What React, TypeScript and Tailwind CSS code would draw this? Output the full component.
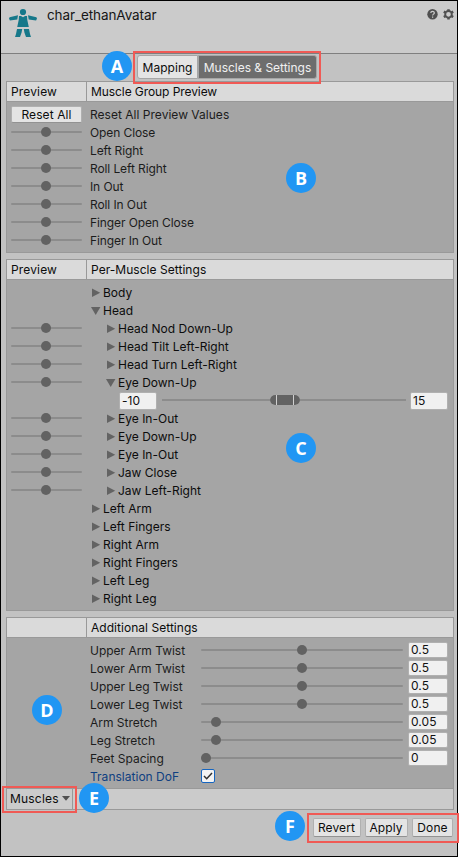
import React from "react";

const Track = ({ pos, className = "" }: { pos: number; className?: string }) => (
  <div className={`relative flex h-[10px] items-center ${className}`}>
    <div className="h-[2px] w-full rounded-full bg-[#8c8c8c]" />
    <div
      className="absolute top-0 size-[10px] rounded-full bg-[#626262]"
      style={{ left: pos }}
    />
  </div>
);

const Preview = ({ show = true }: { show?: boolean }) => (
  <div className="w-[83px] shrink-0 pt-[3px] pl-[4px]">
    {show && <Track pos={30} className="w-[71px]" />}
  </div>
);

const Header = ({ left, right, tight }: { left: string; right: string; tight?: boolean }) => (
  <div className="flex h-[20px] border-b border-[#999999] bg-[#dadada] leading-[19px] text-[#0c0c0c]">
    <div className="w-[80px] shrink-0 border-r border-[#999999] pl-[4px] tracking-[0.15px]">{left}</div>
    <div className={`pl-[4px] ${tight ? "tracking-[-0.08px]" : "tracking-[0.04px]"}`}>{right}</div>
  </div>
);

const Arrow = ({ open }: { open?: boolean }) => (
  <svg width="10" height="10" viewBox="0 0 10 10" className="mt-[4px] shrink-0" fill="#636363">
    {open ? <path d="M0 1H9.4L4.7 9Z" /> : <path d="M1 .5L9.2 4.7L1 9Z" />}
  </svg>
);

const Field = ({ value, className }: { value: string; className: string }) => (
  <div className={`shrink-0 rounded-[2px] border border-[#b0b0b0] bg-[#f0f0f0] pl-[2px] text-[#111] ${className}`}>
    {value}
  </div>
);

const Badge = ({ letter, className }: { letter: string; className: string }) => (
  <div
    className={`absolute flex size-[30px] items-center justify-center rounded-full bg-[#2196f3] font-['Open_Sans',sans-serif] text-[18px] font-bold tracking-normal text-white ${className}`}
  >
    {letter}
  </div>
);

const groups = ["Open Close", "Left Right", "Roll Left Right", "In Out", "Roll In Out", "Finger Open Close", "Finger In Out"];

type Muscle = { name: string; child?: boolean; open?: boolean };
const muscles: Muscle[] = [
  { name: "Body" },
  { name: "Head", open: true },
  { name: "Head Nod Down-Up", child: true },
  { name: "Head Tilt Left-Right", child: true },
  { name: "Head Turn Left-Right", child: true },
  { name: "Eye Down-Up", child: true, open: true },
  { name: "Eye In-Out", child: true },
  { name: "Eye Down-Up", child: true },
  { name: "Eye In-Out", child: true },
  { name: "Jaw Close", child: true },
  { name: "Jaw Left-Right", child: true },
  { name: "Left Arm" },
  { name: "Left Fingers" },
  { name: "Right Arm" },
  { name: "Right Fingers" },
  { name: "Left Leg" },
  { name: "Right Leg" },
];

const additional = [
  { name: "Upper Arm Twist", value: "0.5", pos: 96 },
  { name: "Lower Arm Twist", value: "0.5", pos: 96 },
  { name: "Upper Leg Twist", value: "0.5", pos: 96 },
  { name: "Lower Leg Twist", value: "0.5", pos: 96 },
  { name: "Arm Stretch", value: "0.05", pos: 10 },
  { name: "Leg Stretch", value: "0.05", pos: 10 },
  { name: "Feet Spacing", value: "0", pos: 0 },
];

const button =
  "rounded-[2px] border border-[#b0b0b0] border-b-[#929292] bg-[#e4e4e4] text-center text-[#0c0c0c]";

export default function App() {
  return (
    <div className="h-[857px] w-[472px] overflow-hidden bg-white font-['Inter',sans-serif] text-[12px] tracking-[0.1px] whitespace-nowrap">
      <div className="relative flex h-[857px] w-[458px] flex-col border border-black bg-[#c2c2c2]">
        <header className="flex h-[53px] shrink-0 border-b border-[#7f7f7f] bg-[#cbcbcb]">
          <svg width="28" height="29" viewBox="0 0 28 29" className="mt-[7px] ml-[8px]" fill="#16788a">
            <circle cx="14" cy="4" r="3.1" />
            <path d="M.6 9.2L9 7.3L8.3 11.6L.9 12.6L0 10.6Z M27.4 9.2L19 7.3L19.7 11.6L27.1 12.6L28 10.6Z" />
            <path d="M10 8H12L14 9.3L16 8H18L18.3 12L19.8 19H8.2L9.7 12Z" />
            <path d="M8 21H13.2L12.6 24.5L11 29H6L7 26Z M14.8 21H20L21 26L22 29H17L15.4 24.5Z" />
          </svg>
          <div className="mt-[5px] ml-[10px] text-[13.5px] leading-[18px] tracking-[-0.1px] text-[#161616]">char_ethanAvatar</div>
          <div className="mt-[8px] mr-[3px] ml-auto flex gap-[5px]">
            <svg width="11" height="11" viewBox="0 0 11 11">
              <circle cx="5.5" cy="5.3" r="5.2" fill="#505050" />
              <path d="M3.8 4.1C3.8 1.7 7.3 1.8 7.3 3.9C7.3 5.2 5.6 5.1 5.6 6.6M5.6 7.4V8.7" fill="none" stroke="#cbcbcb" strokeWidth="1.2" />
            </svg>
            <svg width="11" height="11" viewBox="0 0 11 11" fill="none" stroke="#505050">
              <circle cx="5.5" cy="5.3" r="3.3" strokeWidth="1.9" />
              <path d="M5.5 .2V2M5.5 8.8V10.6M.8 2.6L2.4 3.5M8.6 7.1L10.2 8M.8 8L2.4 7.1M8.6 3.5L10.2 2.6" strokeWidth="2.5" />
            </svg>
          </div>
        </header>
        <div className="flex h-[27px] shrink-0 pt-[1px] pl-[136px]">
          <div className="h-[24px] w-[61px] rounded-l-[3px] border border-[#a6a6a6] bg-[#e4e4e4] text-center leading-[23px] tracking-[0.05px] text-[#0c0c0c]">Mapping</div>
          <div className="h-[24px] w-[119px] rounded-r-[3px] border border-[#a6a6a6] bg-[#6d6d6d] text-center leading-[23px] tracking-[-0.02px] text-[#f0f0f0]">Muscles &amp; Settings</div>
        </div>
        <section className="ml-[5px] h-[172px] w-[448px] shrink-0 border border-[#999999] bg-[#a5a5a5] text-[#1c1c1c]">
          <Header left="Preview" right="Muscle Group Preview" tight />
          <div className="flex h-[22px] pt-[4px] leading-[18px]">
            <div className={`ml-[4px] h-[17px] w-[71px] leading-[15px] ${button}`}>Reset All</div>
            <div className="ml-[8px] tracking-[0.02px]">Reset All Preview Values</div>
          </div>
          {groups.map((name) => (
            <div key={name} className="flex h-[18px] leading-[18px] tracking-[-0.1px]">
              <Preview />
              <div>{name}</div>
            </div>
          ))}
        </section>
        <section className="mt-[6px] ml-[5px] h-[352px] w-[448px] shrink-0 border border-[#999999] bg-[#a5a5a5] text-[#0c0c0c]">
          <Header left="Preview" right="Per-Muscle Settings" />
          <div className="pt-[4px]">
            {muscles.map((m, i) => (
              <React.Fragment key={i}>
                <div className="flex h-[18px] leading-[18px] tracking-[0.01px]">
                  <Preview show={!!m.child} />
                  <div className={`flex gap-[2px] ${m.child ? "ml-[16px]" : "ml-[1px]"}`}>
                    <Arrow open={m.open} />
                    <div>{m.name}</div>
                  </div>
                </div>
                {i === 5 && (
                  <div className="flex h-[18px] pl-[112px] leading-[16px]">
                    <Field value="-10" className="h-[18px] w-[38px]" />
                    <div className="relative mt-[3px] ml-[5px] flex h-[10px] w-[244px] items-center">
                      <div className="h-[2px] w-full bg-[#8c8c8c]" />
                      <div className="absolute top-0 left-[108px] flex h-[10px] w-[30px] gap-px overflow-hidden rounded-full bg-[#d0d0d0]">
                        <div className="w-[6px] bg-[#626262]" />
                        <div className="flex-1 bg-[#626262]" />
                        <div className="w-[6px] bg-[#626262]" />
                      </div>
                    </div>
                    <Field value="15" className="ml-[4px] h-[18px] w-[38px]" />
                  </div>
                )}
              </React.Fragment>
            ))}
          </div>
        </section>
        <section className="mt-[6px] ml-[5px] h-[193px] w-[448px] shrink-0 border border-[#999999] bg-[#a5a5a5] text-[#1c1c1c]">
          <Header left="" right="Additional Settings" />
          <div className="h-[150px] pt-[4px]">
            {additional.map((a) => (
              <div key={a.name} className="flex h-[18px] pl-[83px] leading-[18px]">
                <div className="w-[111px] tracking-[-0.02px]">{a.name}</div>
                <Track pos={a.pos} className="mt-[3px] w-[202px]" />
                <Field value={a.value} className="ml-[5px] h-[16px] w-[40px] leading-[14px]" />
              </div>
            ))}
            <div className="flex h-[18px] pl-[83px] leading-[18px]">
              <div className="w-[111px] tracking-[0.02px] text-[#0f4081]">Translation DoF</div>
              <div className="mt-px flex size-[14px] items-center justify-center rounded-[2px] border border-[#1565c0] bg-[#f3f3f3]">
                <svg width="10" height="10" viewBox="0 0 10 10" fill="none" stroke="#303030" strokeWidth="1.5">
                  <path d="M1 5L3.7 7.7L9 2" />
                </svg>
              </div>
            </div>
          </div>
          <div className="flex h-[21px] border-t border-[#999999] bg-[#cbcbcb] text-[#0c0c0c]">
            <div className="flex w-[66px] items-center gap-[3px] border-r border-[#999999] pl-[3px] leading-[20px] tracking-[0.2px]">
              Muscles
              <svg width="8" height="5" viewBox="0 0 8 5" className="-mt-px" fill="#505050"><path d="M0 0H8L4 4.8Z" /></svg>
            </div>
          </div>
        </section>
        <div className="mt-[8px] mr-[4px] flex h-[19px] justify-end gap-[4px] leading-[18px]">
          <div className={`w-[48px] pr-px ${button}`}>Revert</div>
          <div className={`w-[43px] pr-px ${button}`}>Apply</div>
          <div className={`w-[41px] ${button}`}>Done</div>
        </div>

        <div className="absolute top-[50px] left-[132px] h-[33px] w-[188px] border-2 border-[#f05a55]" />
        <div className="absolute top-[785px] left-[1px] h-[27px] w-[75px] border-2 border-[#f05a55]" />
        <div className="absolute top-[812px] left-[306px] h-[30px] w-[152px] border-2 border-[#f05a55]" />
        <Badge letter="A" className="top-[50px] left-[101px]" />
        <Badge letter="B" className="top-[162px] left-[285px]" />
        <Badge letter="C" className="top-[432px] left-[285px]" />
        <Badge letter="D" className="top-[694px] left-[31px]" />
        <Badge letter="E" className="top-[782px] left-[78px]" />
        <Badge letter="F" className="top-[810px] left-[274px]" />
      </div>
    </div>
  );
}
